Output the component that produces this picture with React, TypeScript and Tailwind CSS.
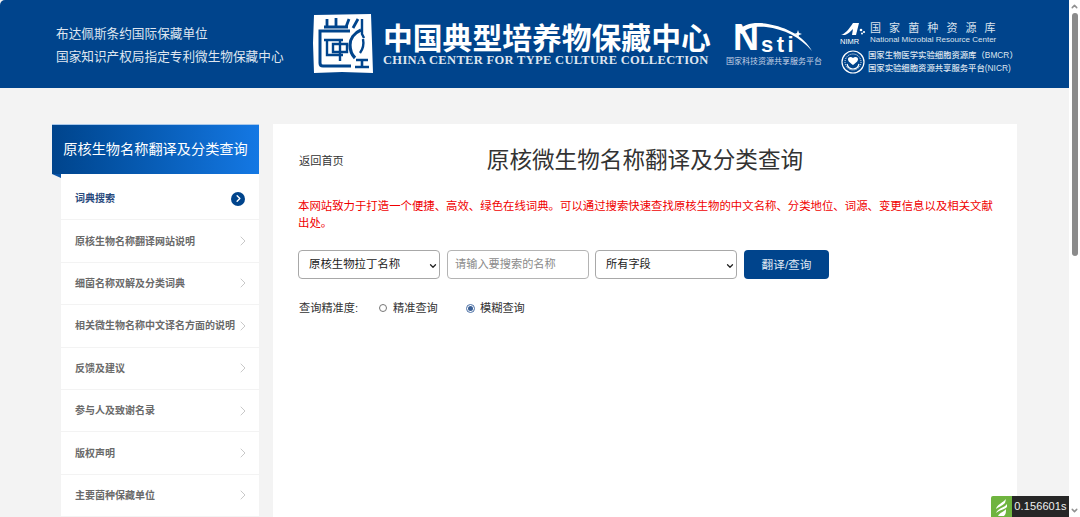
import React from "react";
import { ChevronRight, ChevronUp, ChevronDown } from "lucide-react";

const font = { fontFamily: '"Liberation Sans","Noto Sans CJK SC",sans-serif' };

const items = ["词典搜索","原核生物名称翻译网站说明","细菌名称双解及分类词典","相关微生物名称中文译名方面的说明","反馈及建议","参与人及致谢名录","版权声明","主要菌种保藏单位"];

function Seal() {
  return (
    <svg width="62" height="62" viewBox="0 0 62 62" className="shrink-0">
      <path d="M2 2 L59 1 L60 30 L61 60 L30 59 L2 60 L1 30 Z" fill="#fff" />
      <path d="M15 6v8M24 5v9M12 14h24M37 6l-3 8M46 6l-5 9" stroke="#00448c" strokeWidth="2.8" fill="none" />
      <path d="M38 18H8v32q0 3 3 3h28" stroke="#00448c" strokeWidth="3" fill="none" />
      <path d="M12 27h19M15 27v15h16M21 31h14v8H21zM28 26v22" stroke="#00448c" strokeWidth="2.4" fill="none" />
      <path d="M49 17c-7 3-11 9-11 15s2 10 5 13" stroke="#00448c" strokeWidth="3.2" fill="none" />
      <path d="M50 6v15l2 4M51 26c1 5 0 10-3 14" stroke="#00448c" strokeWidth="2.4" fill="none" />
      <path d="M44 47h12M50 47v6M43 54h14" stroke="#00448c" strokeWidth="2.6" fill="none" />
    </svg>
  );
}

function Nsti() {
  return (
    <div className="relative h-[32px] w-[80px]">
      <span className="absolute left-[-1px] top-[-4px] text-white font-bold text-[36px] leading-[40px]">N</span>
      <span className="absolute left-[27px] top-[12px] text-white font-bold text-[22px] leading-[22px] tracking-[3.5px]">sti</span>
      <svg width="80" height="32" viewBox="0 0 80 32" className="absolute left-0 top-0">
        <path d="M3 10 C10 0 24 0 34 2 C52 5 70 14 78 29 C66 15 50 7 32 5 C20 4 12 6 8 12 Z" fill="#fff" />
        <path d="M64 8l1 3 3 1-3 1-1 3-1-3-3-1 3-1z" fill="#fff" />
      </svg>
    </div>
  );
}

function Nimr() {
  return (
    <svg width="26" height="14" viewBox="0 0 26 14" className="block">
      <path d="M1 13 C5 12 9 7 13 1 L19 1 L16 13 L12 13 L13 7 C10 10 8 12 5 13Z" fill="#fff" />
      <circle cx="21" cy="8" r="1.3" fill="#fff" /><circle cx="24" cy="10" r="1.1" fill="#fff" /><circle cx="22" cy="11.5" r="1" fill="#fff" />
    </svg>
  );
}

function Bmcr() {
  return (
    <svg width="24" height="24" viewBox="0 0 24 24" className="shrink-0">
      <circle cx="12" cy="12" r="11" fill="none" stroke="#fff" strokeWidth="1.2" />
      <circle cx="12" cy="12" r="8" fill="none" stroke="#fff" strokeWidth="1" strokeDasharray="1 1" />
      <path d="M12 15c-4-3-5-4-5-6 0-2 3-3 5-1 2-2 5-1 5 1 0 2-1 3-5 6z" fill="#fff" />
      <path d="M6 14c1 4 4 5 6 5s5-1 6-5" fill="none" stroke="#fff" strokeWidth="1.2" />
    </svg>
  );
}

export default function App() {
  return (
    <div className="flex h-[517px] w-[1080px] overflow-hidden bg-white relative" style={font}>
      <div className="w-[1069px] shrink-0 bg-[#f3f3f3]">
        <header className="h-[88px] bg-[#00448c] rounded-tl-[5px] flex items-center">
          <div className="w-[312px] pl-[56px] pt-[3px] text-[#dfe6f0] text-[12.65px] leading-[23px] shrink-0 whitespace-nowrap">
            <div>布达佩斯条约国际保藏单位</div>
            <div>国家知识产权局指定专利微生物保藏中心</div>
          </div>
          <Seal />
          <div className="ml-[9px] w-[332px] shrink-0 text-white pt-[2px]">
            <div className="text-[29.8px] leading-[30px] font-bold whitespace-nowrap">中国典型培养物保藏中心</div>
            <div className="text-[12.5px] leading-[12px] font-bold text-[#dfe6f0] tracking-[0.32px] whitespace-nowrap" style={{ fontFamily: '"Liberation Serif",serif' }}>CHINA CENTER FOR TYPE CULTURE COLLECTION</div>
          </div>
          <div className="ml-[9px] w-[100px] shrink-0 flex flex-col items-center pt-[2px]">
            <Nsti />
            <div className="mt-[2px] text-[8px] leading-[12px] text-[#c8d4e6] whitespace-nowrap">国家科技资源共享服务平台</div>
          </div>
          <div className="ml-[16px] w-[180px] shrink-0 text-[#dbe3ee] pt-[8px]">
            <div className="flex items-center gap-[5px]">
              <div className="relative w-[25px] h-[23px]">
                <Nimr />
                <span className="absolute left-0 bottom-[-1px] text-[7.5px] leading-[8px] text-white">NIMR</span>
              </div>
              <div>
                <div className="text-[11px] leading-[12px] tracking-[8.1px] whitespace-nowrap">国家菌种资源库</div>
                <div className="text-[8px] leading-[11px] whitespace-nowrap">National Microbial Resource Center</div>
              </div>
            </div>
            <div className="flex items-center gap-[3px] mt-[4px] pl-[1px]">
              <Bmcr />
              <div className="text-[8.35px] leading-[13px] font-medium whitespace-nowrap">
                <div>国家生物医学实验细胞资源库（BMCR）</div>
                <div>国家实验细胞资源共享服务平台(NICR)</div>
              </div>
            </div>
          </div>
        </header>
        <div className="flex pl-[52px] pt-[36px] gap-[14px]">
          <aside className="w-[207px] shrink-0 relative">
            <div className="h-[50px] bg-gradient-to-r from-[#00448c] to-[#1478e4] border-t border-[#a9c8ea] flex items-center justify-center text-white text-[14.2px] whitespace-nowrap">原核生物名称翻译及分类查询</div>
            <div className="absolute left-0 top-[50px] w-0 h-0 border-t-[4px] border-t-[#0b55a8] border-l-[9px] border-l-transparent" />
            <div className="ml-[9px] bg-white pt-[4px]">
              {items.map((t, i) => (
                <div key={t} className={i === 0 ? "h-[42.4px] flex items-center justify-between pl-[14px] pr-[14px] border-b border-[#f3f3f3]" : "h-[42.4px] flex items-center justify-between pl-[14px] pr-[8px] border-b border-[#f3f3f3]"}>
                  <span className={i === 0 ? "text-[10px] font-bold text-[#27497c] whitespace-nowrap" : "text-[10px] font-bold text-[#6a6a6a] whitespace-nowrap"}>{t}</span>
                  {i === 0 ? (
                    <span className="w-[14px] h-[14px] rounded-full bg-[#00448c] flex items-center justify-center">
                      <ChevronRight size={11} strokeWidth={3} color="#fff" />
                    </span>
                  ) : (
                    <ChevronRight size={16} strokeWidth={1.1} color="#b5b5b5" />
                  )}
                </div>
              ))}
            </div>
          </aside>
          <main className="w-[744px] h-[400px] shrink-0 bg-white px-[25px] pt-[22px]">
            <div className="relative h-[29px] flex items-center justify-center">
              <span className="absolute left-[1px] top-[7px] text-[11.2px] leading-[16px] text-[#333]">返回首页</span>
              <h1 className="text-[22.6px] leading-[29px] text-[#333] font-normal whitespace-nowrap">原核微生物名称翻译及分类查询</h1>
            </div>
            <p className="mt-[23px] w-[700px] text-[11.4px] leading-[17px] text-[#f00000]">本网站致力于打造一个便捷、高效、绿色在线词典。可以通过搜索快速查找原核生物的中文名称、分类地位、词源、变更信息以及相关文献出处。</p>
            <div className="mt-[18px] flex items-center">
              <div className="relative w-[142px] h-[29px] border border-[#a8a8a8] rounded-[4px] flex items-center pl-[10px] text-[11.4px] text-[#222]">
                原核生物拉丁名称
                <ChevronDown size={10} strokeWidth={3} className="absolute right-[1px] top-[10px]" color="#222" />
              </div>
              <div className="ml-[7px] w-[142px] h-[29px] border border-[#b4b4b4] rounded-[4px] flex items-center pl-[7px] text-[11.2px] text-[#8a8a8a]">请输入要搜索的名称</div>
              <div className="relative ml-[6px] w-[142px] h-[29px] border border-[#a8a8a8] rounded-[4px] flex items-center pl-[10px] text-[11.2px] text-[#222]">
                所有字段
                <ChevronDown size={10} strokeWidth={3} className="absolute right-[1px] top-[10px]" color="#222" />
              </div>
              <button className="ml-[7px] w-[85px] h-[29px] rounded-[4px] bg-[#00448c] text-[#dfe8f3] text-[11.7px]">翻译/查询</button>
            </div>
            <div className="mt-[20px] flex items-center h-[18px] text-[11.2px] text-[#333]">
              <span className="w-[81px] pl-[1px]">查询精准度:</span>
              <span className="w-[8px] h-[8px] rounded-full border border-[#767676] bg-white" />
              <span className="ml-[6px] w-[73px]">精准查询</span>
              <span className="w-[9px] h-[9px] rounded-full border border-[#4a6fa5] flex items-center justify-center"><span className="w-[5px] h-[5px] rounded-full bg-[#3a5f95]" /></span>
              <span className="ml-[5px]">模糊查询</span>
            </div>
          </main>
        </div>
      </div>
      <div className="w-[11px] shrink-0 bg-white flex flex-col items-center relative">
        <ChevronUp size={9} strokeWidth={4} color="#909090" className="mt-[2px]" />
        <div className="mt-[2px] w-[6px] h-[243px] rounded-[3px] bg-[#8b8b8b]" />
        <ChevronDown size={9} strokeWidth={4} color="#909090" className="absolute bottom-[2px]" />
      </div>
      <div className="absolute left-[991px] top-[496px] flex h-[21px]">
        <div className="w-[21px] bg-[#6fb43f] rounded-tl-[2px] flex items-center justify-center">
          <svg width="15" height="18" viewBox="0 0 15 18"><path d="M12 1C9 5 3 6 2 11c2-2 6-3 9-6zM13 6c-3 4-9 4-11 9 3-3 8-3 11-6zM12 11c-2 3-6 3-8 7h6c2-2 2-4 2-7z" fill="#fff" /></svg>
        </div>
        <div className="w-[57px] bg-[#262626] text-[#f0f0f0] text-[11px] flex items-center justify-center tracking-[0.1px]">0.156601s</div>
      </div>
    </div>
  );
}
